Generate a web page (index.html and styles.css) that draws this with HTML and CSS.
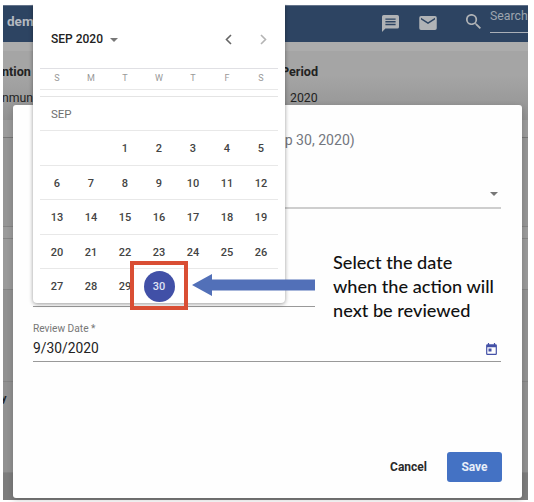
FILE: index.html
```
<!DOCTYPE html>
<html lang="en">
<head>
<meta charset="utf-8">
<title>Review date</title>
<link rel="stylesheet" href="styles.css">
</head>
<body>
<div class="app">
  <header class="topbar">
    <span class="brand">dem</span>
    <svg class="icon chat" viewBox="2 2 20 20"><path d="M20 2H4a2 2 0 0 0-2 2v18l4-4h14a2 2 0 0 0 2-2V4a2 2 0 0 0-2-2zM6 6h12v1.600H6zm0 3.200h12v1.600H6zm0 3.200h12V14H6z" fill-rule="evenodd"/></svg>
    <svg class="icon mail" viewBox="2 4 20 16"><path d="M20 4H4a2 2 0 0 0-2 2v12a2 2 0 0 0 2 2h16a2 2 0 0 0 2-2V6a2 2 0 0 0-2-2zm0 4-8 5-8-5V6l8 5 8-5z"/></svg>
    <svg class="icon lens" viewBox="3 3 17.500 17.500"><path d="M15.500 14h-.8l-.3-.3A6.500 6.500 0 1 0 13.700 14.400l.3.300v.8l5 5 1.500-1.500zm-6 0a4.500 4.500 0 1 1 0-9 4.500 4.500 0 0 1 0 9z"/></svg>
    <div class="search">Search</div>
  </header>
  <main class="page">
    <section class="summary">
      <div class="fact fact-left"><b>ntion</b><span>nmun</span></div>
      <div class="fact fact-right"><b>Period</b><span>2020</span></div>
    </section>
    <div class="band band-a"></div>
    <div class="band band-b"></div>
    <div class="band band-c"></div>
    <div class="band band-d"></div>
    <div class="band band-e"></div>
    <div class="band band-f">y</div>
    <div class="band band-g"></div>
  </main>
</div>

<div class="dialog">
  <div class="title">(Sep 30, 2020)</div>
  <div class="field select"><svg class="caret" viewBox="0 0 8 4"><path d="M0 0h8L4 4z"/></svg></div>
  <div class="field short"></div>
  <div class="label">Review Date *</div>
  <div class="field date"><span>9/30/2020</span><svg class="cal-icon" viewBox="3 1 18 20"><path d="M19 3h-1V1h-2v2H8V1H6v2H5a2 2 0 0 0-2 2v14a2 2 0 0 0 2 2h14a2 2 0 0 0 2-2V5a2 2 0 0 0-2-2zm0 16H5V8h14zM7 10h5v5H7z"/></svg></div>
  <div class="actions"><button class="cancel">Cancel</button><button class="save">Save</button></div>
</div>

<div class="picker">
  <div class="picker-head">
    <span class="month">SEP 2020</span>
    <svg class="caret" viewBox="0 0 8 4"><path d="M0 0h8L4 4z"/></svg>
    <svg class="arrow prev" viewBox="0 0 7 11"><path d="M6 1 1.500 5.500 6 10"/></svg>
    <svg class="arrow next" viewBox="0 0 7 11"><path d="m1 1 4.500 4.500L1 10"/></svg>
  </div>
  <div class="week names"><span>S</span><span>M</span><span>T</span><span>W</span><span>T</span><span>F</span><span>S</span></div>
  <div class="divider"></div>
  <div class="grid">
    <div class="month-label">SEP</div>
    <div class="week"><span></span><span></span><span>1</span><span>2</span><span>3</span><span>4</span><span>5</span></div>
    <div class="week"><span>6</span><span>7</span><span>8</span><span>9</span><span>10</span><span>11</span><span>12</span></div>
    <div class="week"><span>13</span><span>14</span><span>15</span><span>16</span><span>17</span><span>18</span><span>19</span></div>
    <div class="week"><span>20</span><span>21</span><span>22</span><span>23</span><span>24</span><span>25</span><span>26</span></div>
    <div class="week"><span>27</span><span>28</span><span>29</span><span><i class="selected">30</i></span><span></span><span></span><span></span></div>
  </div>
</div>

<div class="highlight"></div>
<svg class="pointer" viewBox="0 0 123 22"><path d="M0 11 20 0v5.500h103v11H20V22z"/></svg>
<div class="callout">Select the date<br>when the action will<br>next be reviewed</div>
</body>
</html>
```
FILE: styles.css
```
* { box-sizing: border-box; }
body {
  margin: 0;
  width: 534px;
  height: 502px;
  overflow: hidden;
  position: relative;
  background: #fff;
  font-family: Roboto, sans-serif;
  color: #222;
}
svg { display: block; }
.app {
  width: 525px;
  height: 495px;
  margin: 5px 0 0 3px;
  overflow: hidden;
}
.topbar {
  height: 37px;
  background: #2d4462;
  border-top: 1px solid #64748b;
  display: flex;
  align-items: flex-start;
}
.brand {
  width: 379px;
  padding: 7px 0 0 4px;
  font-size: 13.500px;
  line-height: 17px;
  font-weight: 700;
  color: #b4b9c0;
}
.icon { fill: #b0b3b6; flex: none; }
.chat { width: 17px; height: 17px; margin-top: 9px; }
.mail { width: 18px; height: 14px; margin: 10px 0 0 20px; }
.lens { width: 15px; height: 15px; margin: 8px 0 0 29px; }
.search {
  margin-left: 9px;
  flex: 1;
  height: 27px;
  padding-top: 2px;
  border-bottom: 1px solid #aab0b8;
  font-size: 12.300px;
  line-height: 16px;
  color: #9da5af;
  white-space: nowrap;
}
.page { height: 458px; background: #999; }
.summary {
  height: 78px;
  border-top: 9px solid #acacac;
  background: linear-gradient(#a5a5a5 0 35%, #929292);
  display: flex;
  justify-content: space-between;
  font-size: 12.300px;
}
.fact { display: flex; flex-direction: column; padding-top: 13px; gap: 10px; line-height: 16px; }
.fact b { font-weight: 700; font-size: 12.600px; }
.fact-left { margin-left: -1px; }
.fact-right { width: 247px; }
.fact-right span { padding-left: 9px; }
.band { background: #969696; border-bottom: 1px solid #858585; }
.band-a { height: 18px; background: #9b9b9b; border-color: #777; }
.band-b { height: 89px; }
.band-c { height: 12px; background: #9b9b9b; }
.band-d { height: 51px; background: #9a9a9a; }
.band-e { height: 92px; background: #929292; }
.band-f { height: 91px; padding-top: 10px; font-size: 11px; line-height: 14px; font-weight: 700; text-indent: -2px; background: #919191; }
.band-g { height: 28px; background: #7d7d7d; border: 0; }
.dialog {
  position: absolute;
  left: 13px;
  top: 105px;
  width: 509px;
  height: 393px;
  padding: 25px 21px 0 20px;
  background: #fefefe;
  border-radius: 3px;
  box-shadow: 0 2px 6px rgba(0,0,0,.2);
}
.title { height: 20px; padding-left: 231px; font-size: 14.100px; line-height: 20px; color: #73777e; white-space: nowrap; }
.field { border-bottom: 1px solid #999; }
.select { height: 59px; border-bottom: 2px solid #cecece; display: flex; justify-content: flex-end; align-items: flex-end; padding-bottom: 11px; }
.caret { width: 8px; height: 4px; fill: #777; }
.short { width: 282px; height: 98px; }
.label { margin-top: 14px; font-size: 10.200px; line-height: 16px; color: #777; }
.date { height: 25px; display: flex; justify-content: space-between; font-size: 13.800px; line-height: 22px; }
.cal-icon { width: 11px; height: 12px; margin: 6px 4px 0 0; fill: #4451a7; }
.select .caret { margin-right: 3px; }
.actions { display: flex; justify-content: flex-end; align-items: center; margin: 90px -1px 0 0; }
button { border: 0; padding: 0; background: none; font: 700 12px Roboto, sans-serif; color: #2a2a2a; }
.cancel { margin-right: 20px; }
.save { width: 55px; height: 30px; border-radius: 3px; background: #4472c4; color: #e8eef9; }
.picker {
  position: absolute;
  left: 33px;
  top: 4px;
  width: 252px;
  height: 299px;
  background: #fff;
  border-radius: 0 0 4px 4px;
  box-shadow: 0 1px 4px rgba(0,0,0,.4);
  clip-path: inset(0 -6px -6px -6px);
}
.picker-head { height: 65px; margin: 0 7px; padding: 5px 11px 0; display: flex; align-items: center; border-bottom: 1px solid #e0e0e4; }
.month { width: 59px; font-size: 12px; font-weight: 500; line-height: 16px; white-space: nowrap; }
.picker-head .caret { margin-top: 2px; }
.arrow { width: 7px; height: 11px; fill: none; stroke: #666; stroke-width: 1.600; margin-top: 2px; }
.prev { margin-left: 107px; }
.next { margin-left: 28px; stroke: #b4b4b4; }
.week {
  height: 34.500px;
  margin: 0 7px;
  display: grid;
  grid-template-columns: repeat(7, 34px);
  align-items: center;
  text-align: center;
  font-size: 11px;
  font-weight: 500;
  color: #444;
  border-bottom: 1px solid #e8e8e8;
}
.names { height: 21px; padding-bottom: 5px; font-size: 9px; font-weight: 400; color: #999; }
.divider { height: 6.500px; margin: 0 7px; border-bottom: 1px solid #e4e4e4; }
.month-label { height: 34.500px; margin: 0 7px; padding-left: 11px; font-size: 11.500px; line-height: 34px; color: #707070; border-bottom: 1px solid #e8e8e8; }
.week span { position: relative; top: 1px; }
.names span { top: 1px; }
.week:last-child { border: 0; }
.week:last-child span { top: 0; }
.selected {
  display: block;
  width: 31px;
  height: 31px;
  margin: 0 auto;
  border-radius: 50%;
  background: #4150a7;
  color: #dfe3f5;
  font-style: normal;
  line-height: 31px;
}
.highlight { position: absolute; left: 130px; top: 261px; width: 58px; height: 49px; border: 4px solid #d94e34; }
.pointer { position: absolute; left: 192px; top: 274px; width: 123px; height: 22px; fill: #5270b8; }
.callout { position: absolute; left: 333px; top: 250px; font: 500 18.150px/24px Lato, sans-serif; color: #111; white-space: nowrap; }
```
